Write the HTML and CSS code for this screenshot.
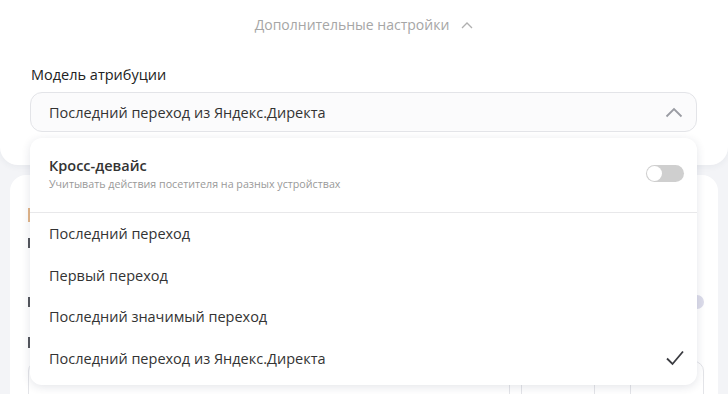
FILE: index.html
```html
<!DOCTYPE html>
<html lang="ru">
<head>
<meta charset="utf-8"/>
<meta content="width=device-width, initial-scale=1.0" name="viewport"/>
<title>Модель атрибуции</title>
<link rel="stylesheet" href="styles.css">
</head>
<body>
<div class="settings">
  <div class="more">
    <span>Дополнительные настройки</span>
    <svg class="more-arrow" width="12" height="8" viewBox="0 0 12 8"><path d="M1 7 L6 2 L11 7" fill="none" stroke="#b0b0b0" stroke-width="1.3"/></svg>
  </div>
  <div class="field">
    <div class="label">Модель атрибуции</div>
    <div class="select-wrap">
      <div class="select">
        <span>Последний переход из Яндекс.Директа</span>
        <svg width="18" height="11" viewBox="0 0 18 11"><path d="M1.5 9.5 L9 2 L16.5 9.5" fill="none" stroke="#9a9ca3" stroke-width="1.8"/></svg>
      </div>
      <div class="menu">
        <div class="cross">
          <div>
            <div class="cross-title">Кросс-девайс</div>
            <div class="cross-hint">Учитывать действия посетителя на разных устройствах</div>
          </div>
          <div class="switch"><div class="knob"></div></div>
        </div>
        <div class="option">Последний переход</div>
        <div class="option">Первый переход</div>
        <div class="option">Последний значимый переход</div>
        <div class="option selected">
          <span>Последний переход из Яндекс.Директа</span>
          <svg width="20" height="18" viewBox="0 0 20 18"><path d="M2 9.5 L7.5 15 L18 2.5" fill="none" stroke="#3a3b40" stroke-width="1.8"/></svg>
        </div>
      </div>
    </div>
  </div>
</div>

<div class="goals">
  <div class="goal-head"><span class="mark"></span></div>
  <div class="goal-row first"><span class="glyph"></span></div>
  <div class="goal-row second"><span class="glyph"></span><span class="mini-switch"></span></div>
  <div class="goal-row third"><span class="glyph"></span></div>
  <div class="inputs">
    <div class="input wide"></div>
    <div class="input"></div>
    <div class="input last"></div>
  </div>
</div>
</body>
</html>
```

FILE: styles.css
```css
body {
  margin: 0;
  background: #f3f4f7;
  font-family: "Open Sans", "Noto Sans", sans-serif;
  color: #222;
  overflow: hidden;
  height: 394px;
}

.settings {
  background: #fff;
  height: 165px;
  border-radius: 0 0 18px 18px;
  box-shadow: 0 2px 6px rgba(40, 50, 80, 0.05);
}

.more {
  display: flex;
  justify-content: center;
  align-items: center;
  gap: 12px;
  padding-top: 13px;
  font-size: 14px;
  color: #a6a6a6;
  height: 22px;
}
.more-arrow {
  margin-top: 1px;
}

.field {
  padding: 30px 31px 0 30px;
}
.label {
  font-size: 14.5px;
  color: #222;
  padding-left: 1px;
  margin-bottom: 7px;
  line-height: 20px;
}

.select-wrap {
  position: relative;
}
.select {
  height: 38px;
  border: 1px solid #e3e4e8;
  border-radius: 12px;
  background: #fbfbfc;
  display: flex;
  align-items: center;
  justify-content: space-between;
  padding: 0 13px 0 18px;
  font-size: 14.5px;
  color: #333;
}

.menu {
  position: absolute;
  top: 46px;
  left: 0;
  right: 0;
  background: #fff;
  border-radius: 12px;
  box-shadow: 0 2px 10px rgba(30, 40, 70, 0.12);
  z-index: 10;
  padding-bottom: 6px;
}
.cross {
  display: flex;
  justify-content: space-between;
  align-items: center;
  padding: 18px 13px 21px 19px;
  border-bottom: 1px solid #e8e8ea;
}
.cross-title {
  font-size: 14.5px;
  font-weight: 600;
  color: #333;
  line-height: 19px;
}
.cross-hint {
  font-size: 10.7px;
  color: #999;
  line-height: 14px;
  margin-top: 2px;
}
.switch {
  width: 38px;
  height: 17px;
  border-radius: 9px;
  background: #cfcfcf;
  position: relative;
}
.knob {
  position: absolute;
  left: 1px;
  top: 1px;
  width: 15px;
  height: 15px;
  border-radius: 50%;
  background: #fff;
}

.option {
  height: 41.5px;
  display: flex;
  align-items: center;
  justify-content: space-between;
  padding: 0 12px 0 19px;
  font-size: 14.5px;
  color: #333;
}
.option.selected {
  height: 41px;
}

.goals {
  margin: 10px 10px 0;
  background: #fff;
  border-radius: 16px 16px 0 0;
  height: 219px;
  padding: 33px 14px 0 18px;
  box-sizing: border-box;
  overflow: hidden;
}
.goal-head {
  display: flex;
  align-items: center;
  height: 14px;
}
.mark {
  width: 2px;
  height: 14px;
  background: #e3b68a;
}
.goal-row {
  height: 10px;
  display: flex;
  align-items: center;
  justify-content: space-between;
}
.goal-row.first {
  margin-top: 16px;
}
.goal-row.second {
  margin-top: 49px;
}
.goal-row.third {
  margin-top: 30px;
  height: 11px;
}
.glyph {
  width: 3px;
  height: 100%;
  background: #55575d;
}
.mini-switch {
  width: 30px;
  height: 14px;
  border-radius: 7px;
  background: #dcdcea;
}
.inputs {
  display: flex;
  gap: 11px;
  margin-top: 13px;
}
.input {
  height: 60px;
  border: 1px solid #e3e4e8;
  border-radius: 10px;
  width: 74px;
  box-sizing: border-box;
}
.input.wide {
  flex: 1;
}
.input.last {
  margin-left: 24px;
}
```
